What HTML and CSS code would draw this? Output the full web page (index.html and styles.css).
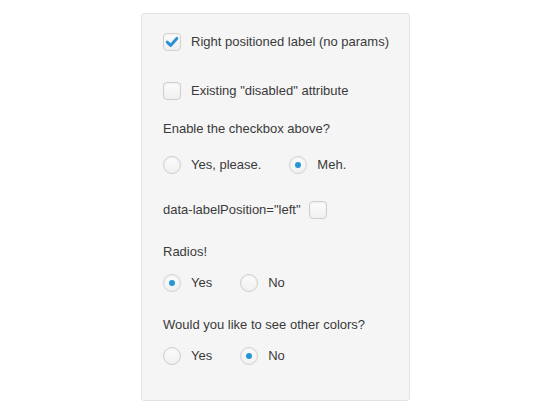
FILE: index.html
```html
<!DOCTYPE html>
<html>
<head>
<meta charset="utf-8">
<link rel="stylesheet" href="styles.css">
</head>
<body>
<div class="panel">
  <label class="row r1"><span class="box checked"><svg viewBox="0 0 18 18" width="18" height="18"><path d="M4.2 9.2 L7.6 12.4 L13.8 5.4" fill="none" stroke="#2b92d4" stroke-width="3" stroke-linecap="round" stroke-linejoin="round"/></svg></span><span class="txt">Right positioned label (no params)</span></label>
  <label class="row r2"><span class="box"></span><span class="txt">Existing "disabled" attribute</span></label>
  <div class="q q1">Enable the checkbox above?</div>
  <div class="row r3">
    <label class="opt"><span class="radio"></span><span class="txt">Yes, please.</span></label>
    <label class="opt"><span class="radio on"></span><span class="txt">Meh.</span></label>
  </div>
  <label class="row r4"><span class="txt left">data-labelPosition="left"</span><span class="box"></span></label>
  <div class="q q2">Radios!</div>
  <div class="row r5">
    <label class="opt"><span class="radio on"></span><span class="txt">Yes</span></label>
    <label class="opt"><span class="radio"></span><span class="txt">No</span></label>
  </div>
  <div class="q q3">Would you like to see other colors?</div>
  <div class="row r6">
    <label class="opt"><span class="radio"></span><span class="txt">Yes</span></label>
    <label class="opt"><span class="radio on"></span><span class="txt">No</span></label>
  </div>
</div>
</body>
</html>
```
FILE: styles.css
```css
html, body { margin: 0; padding: 0; background: #fff; }
body {
  font-family: "Liberation Sans", Arial, sans-serif;
  font-size: 13px;
  color: #3a3a3a;
  padding: 13px 0 0 141px;
}
.panel {
  box-sizing: border-box;
  width: 269px;
  height: 388px;
  background: #f5f5f5;
  border: 1px solid #e3e3e3;
  border-radius: 3px;
  padding: 19px 21px;
  display: flex;
  flex-direction: column;
}
.row { display: flex; align-items: center; height: 18px; line-height: 18px; }
.q { height: 18px; line-height: 18px; }
.txt { margin-left: 10px; white-space: nowrap; }
.txt.left { margin-left: 0; margin-right: 8px; }
.opt { display: flex; align-items: center; margin-right: 28px; }
.box, .radio {
  box-sizing: border-box;
  width: 18px; height: 18px;
  flex: none;
  border: 1px solid #cfcfcf;
  background: linear-gradient(#fcfcfc, #f0f0f0);
  box-shadow: inset 0 1px 2px rgba(0,0,0,0.06), 0 0 1px rgba(0,0,0,0.05);
}
.box { border-radius: 4px; position: relative; }
.box svg { position: absolute; left: -1px; top: -1px; }
.box.checked { border-color: #d8d0d0; background: linear-gradient(#fdfdfd, #f1eeee); }
.radio { border-radius: 50%; position: relative; }
.radio.on { border-color: #d9d0d3; }
.radio.on::after {
  content: "";
  position: absolute;
  left: 5px; top: 5px;
  width: 6px; height: 6px;
  border-radius: 50%;
  background: #2596d1;
}
.r2 { margin-top: 31px; }
.q1 { margin-top: 20px; }
.r3 { margin-top: 18px; }
.r4 { margin-top: 27px; }
.q2 { margin-top: 24px; }
.r5 { margin-top: 13px; }
.q3 { margin-top: 24px; }
.r6 { margin-top: 13px; }
```
